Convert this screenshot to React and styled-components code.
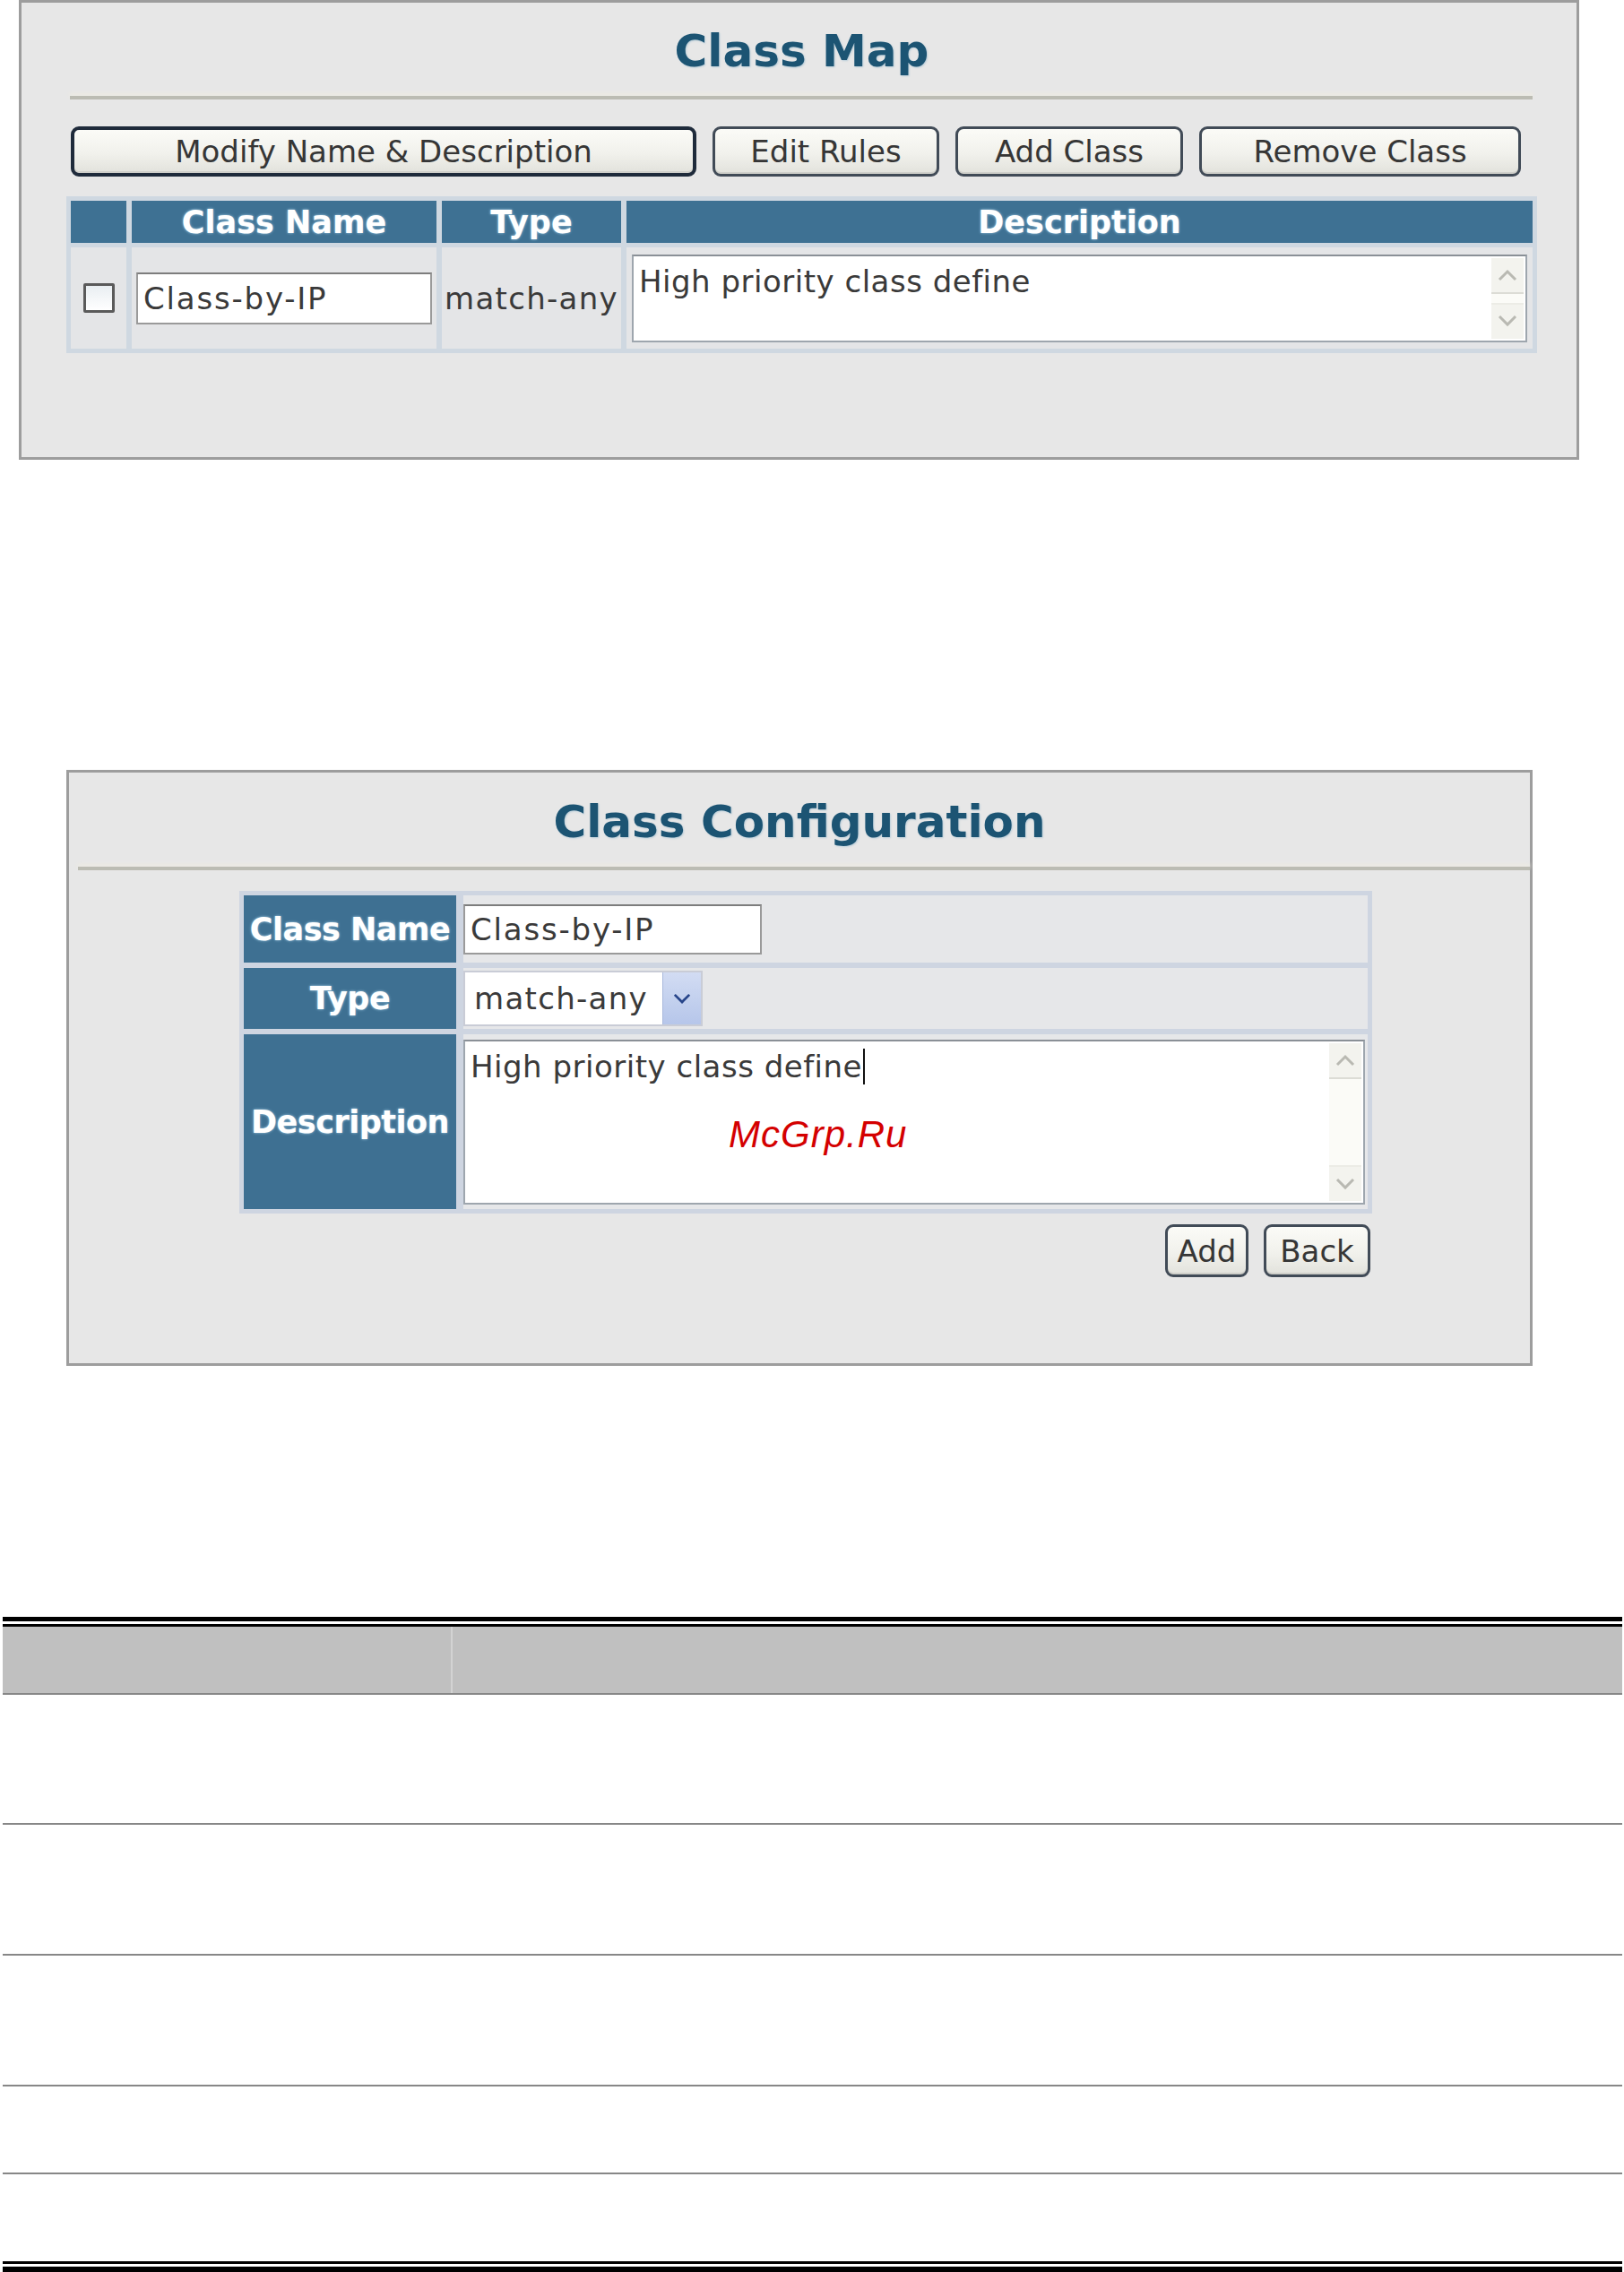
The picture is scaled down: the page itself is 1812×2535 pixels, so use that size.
import styled, { createGlobalStyle } from "styled-components";

const GlobalStyle = createGlobalStyle`
  html, body {
    margin: 0;
    padding: 0;
    background: #ffffff;
  }
  body {
    font-family: "DejaVu Sans", Verdana, sans-serif;
    color: #333;
  }
`;

const Page = styled.div`
  width: 1812px;
  height: 2535px;
  display: flex;
  flex-direction: column;
  background: #ffffff;
`;

const Panel = styled.section`
  box-sizing: border-box;
  display: flex;
  flex-direction: column;
  margin-left: ${(p) => p.$left}px;
  margin-top: ${(p) => p.$top}px;
  width: ${(p) => p.$width}px;
  height: ${(p) => p.$height}px;
  padding: ${(p) => p.$pad};
  border: 3px solid #9d9d9d;
  background: #e7e7e7;
`;

const Title = styled.h1`
  box-sizing: border-box;
  margin: 0;
  height: ${(p) => p.$height}px;
  padding-top: 5px;
  line-height: ${(p) => p.$height - 5}px;
  text-align: center;
  font-family: "DejaVu Sans", Verdana, sans-serif;
  font-weight: bold;
  font-size: 50px;
  color: #1c5473;
  text-shadow: 1px 1px 2px #b7ccd8;
`;

const Rule = styled.div`
  height: 4px;
  margin: ${(p) => p.$margin};
  background: #bcbcb3;
  box-shadow: 0 -3px 4px #eeebe2;
`;

const ButtonRow = styled.div`
  display: flex;
  justify-content: ${(p) => (p.$end ? "flex-end" : "flex-start")};
  gap: ${(p) => p.$gap}px;
  margin: ${(p) => p.$margin};
`;

const Button = styled.button`
  box-sizing: border-box;
  width: ${(p) => p.$width}px;
  height: ${(p) => p.$height}px;
  padding: 0;
  border: ${(p) => (p.$focused ? "4px solid #1f2b3b" : "3px solid #414b57")};
  border-radius: 9px;
  background: linear-gradient(#fbfbf7, #f1f1ec 55%, #e2e2dc);
  font-family: "DejaVu Sans", Verdana, sans-serif;
  font-size: 34px;
  color: #363636;
  box-shadow: inset 0 -2px 0 #cfcfca;
`;

const MapTable = styled.div`
  display: grid;
  grid-template-columns: 62px 340px 200px 1fr;
  grid-template-rows: 47px 113px;
  column-gap: 6px;
  row-gap: 5px;
  margin-top: 22px;
  padding: 5px;
  background: #cfd8e1;
`;

const HeadCell = styled.div`
  display: flex;
  align-items: center;
  justify-content: center;
  background: #3e7193;
  color: #ffffff;
  font-weight: bold;
  font-size: 35px;
  text-shadow: 0 0 3px #a9d2ea;
`;

const DataCell = styled.div`
  display: flex;
  align-items: center;
  justify-content: ${(p) => (p.$center ? "center" : "flex-start")};
  padding: ${(p) => p.$pad || "0"};
  background: #e4e5e7;
  font-size: 34px;
  letter-spacing: 1.3px;
  color: #3a3a3a;
  white-space: nowrap;
  overflow: hidden;
`;

const CheckBox = styled.span`
  box-sizing: border-box;
  width: 35px;
  height: 33px;
  border: 3px solid #5a5a5a;
  border-radius: 2px;
  background: linear-gradient(#e9eef2, #ffffff);
`;

const TextBox = styled.div`
  box-sizing: border-box;
  display: flex;
  align-items: center;
  width: ${(p) => p.$width}px;
  height: ${(p) => p.$height}px;
  padding-left: 6px;
  border: 2px solid #9a9a9a;
  border-top-color: #7d7d7d;
  background: #ffffff;
  font-size: 34px;
  letter-spacing: 1.8px;
  color: #3a3a3a;
`;

const Select = styled.div`
  box-sizing: border-box;
  display: flex;
  width: 267px;
  height: 62px;
  border: 2px solid #c9ccd6;
  background: #ffffff;
  font-size: 34px;
  letter-spacing: 1.3px;
  color: #3a3a3a;
`;

const SelectValue = styled.span`
  flex: 1;
  display: flex;
  align-items: center;
  padding-left: 10px;
`;

const SelectArrow = styled.span`
  display: flex;
  align-items: center;
  justify-content: center;
  width: 42px;
  background: linear-gradient(#d2dcf3, #b6c6ea);
  border-left: 1px solid #a9b9dc;
`;

const AreaWrap = styled.div`
  position: relative;
  box-sizing: border-box;
  width: ${(p) => p.$width}px;
  height: ${(p) => p.$height}px;
  padding: 8px 6px;
  border: 2px solid #9ea6ae;
  border-top-color: #8a9097;
  background: #ffffff;
  font-size: 34px;
  line-height: 40px;
  letter-spacing: 0.5px;
  color: #3a3a3a;
`;

const Caret = styled.span`
  display: inline-block;
  width: 2px;
  height: 40px;
  margin-left: 1px;
  vertical-align: top;
  background: #111;
`;

const ScrollBar = styled.div`
  position: absolute;
  top: 2px;
  right: 2px;
  bottom: 2px;
  width: 36px;
  display: flex;
  flex-direction: column;
  justify-content: space-between;
  background: #fbfbf7;
`;

const ScrollArrow = styled.span`
  display: flex;
  align-items: center;
  justify-content: center;
  height: 38px;
  background: #f3f3ee;
  border-bottom: ${(p) => (p.$up ? "2px solid #dcdcd5" : "none")};
  border-top: ${(p) => (p.$up ? "none" : "2px solid #ecece6")};
`;

const Watermark = styled.span`
  position: absolute;
  left: 294px;
  top: 84px;
  font-family: "Liberation Sans", Arial, sans-serif;
  font-style: italic;
  font-size: 42px;
  letter-spacing: 1px;
  color: #d40000;
`;

const FormTable = styled.div`
  display: grid;
  grid-template-columns: 237px 1fr;
  grid-template-rows: 75px 68px 195px;
  column-gap: 8px;
  row-gap: 6px;
  width: 1264px;
  margin: 23px 0 0 190px;
  padding: 5px;
  box-sizing: border-box;
  background: #ced5e1;
`;

const LabelCell = styled.div`
  display: flex;
  align-items: center;
  justify-content: center;
  background: #3e7092;
  color: #ffffff;
  font-weight: bold;
  font-size: 35px;
  letter-spacing: -0.5px;
  white-space: nowrap;
  text-shadow: 0 0 3px #a9d2ea;
`;

const ValueCell = styled.div`
  display: flex;
  align-items: flex-start;
  padding-top: ${(p) => p.$top}px;
  background: #e6e7e9;
`;

const DocTable = styled.div`
  display: flex;
  flex-direction: column;
  width: 1807px;
  margin: 280px 0 0 3px;
`;

const DoubleRule = styled.div`
  box-sizing: border-box;
  height: ${(p) => (p.$bottom ? 12 : 11)}px;
  border-top: ${(p) => (p.$bottom ? 3 : 5)}px solid #000;
  border-bottom: ${(p) => (p.$bottom ? 6 : 3)}px solid #000;
  background: #fff;
`;

const DocRow = styled.div`
  display: grid;
  grid-template-columns: 502px 1fr;
  height: ${(p) => p.$height}px;
  background: ${(p) => (p.$head ? "#c0c0c0" : "#ffffff")};
  border-bottom: ${(p) => (p.$last ? "none" : "2px solid #878787")};
`;

const DocCell = styled.div`
  border-right: ${(p) => (p.$head ? "2px solid #d3d3d3" : "none")};
`;

const UpChevron = () => (
  <svg width="22" height="14" viewBox="0 0 22 14">
    <path d="M2 12 L11 3 L20 12" fill="none" stroke="#b9b9b2" strokeWidth="3" />
  </svg>
);

const DownChevron = ({ color = "#b9b9b2", size = 22 }) => (
  <svg width={size} height={size * 0.64} viewBox="0 0 22 14">
    <path d="M2 2 L11 11 L20 2" fill="none" stroke={color} strokeWidth="3" />
  </svg>
);

const FakeScroll = () => (
  <ScrollBar>
    <ScrollArrow $up>
      <UpChevron />
    </ScrollArrow>
    <ScrollArrow>
      <DownChevron />
    </ScrollArrow>
  </ScrollBar>
);

const docRows = [143, 144, 144, 96, 97];

function ClassMap() {
  return (
    <Panel $left={21} $top={0} $width={1741} $height={516} $pad="0 44px 0 50px">
      <Title $height={104}>Class Map</Title>
      <Rule $margin="0 5px 0 4px" />
      <ButtonRow $gap={18} $margin="30px 0 0 5px">
        <Button $width={698} $height={56} $focused>
          Modify Name &amp; Description
        </Button>
        <Button $width={253} $height={56}>Edit Rules</Button>
        <Button $width={254} $height={56}>Add Class</Button>
        <Button $width={359} $height={56}>Remove Class</Button>
      </ButtonRow>
      <MapTable>
        <HeadCell />
        <HeadCell>Class Name</HeadCell>
        <HeadCell>Type</HeadCell>
        <HeadCell>Description</HeadCell>
        <DataCell $center>
          <CheckBox />
        </DataCell>
        <DataCell $center>
          <TextBox $width={330} $height={58}>Class-by-IP</TextBox>
        </DataCell>
        <DataCell $pad="0 0 0 3px">match-any</DataCell>
        <DataCell $pad="0 5px 0 6px">
          <AreaWrap $width={999} $height={98}>
            High priority class define
            <FakeScroll />
          </AreaWrap>
        </DataCell>
      </MapTable>
    </Panel>
  );
}

function ClassConfiguration() {
  return (
    <Panel $left={74} $top={346} $width={1636} $height={668} $pad="0">
      <Title $height={105}>Class Configuration</Title>
      <Rule $margin="0 0 0 10px" />
      <FormTable>
        <LabelCell>Class Name</LabelCell>
        <ValueCell $top={10}>
          <TextBox $width={333} $height={56}>Class-by-IP</TextBox>
        </ValueCell>
        <LabelCell>Type</LabelCell>
        <ValueCell $top={3}>
          <Select>
            <SelectValue>match-any</SelectValue>
            <SelectArrow>
              <DownChevron color="#27458a" size={20} />
            </SelectArrow>
          </Select>
        </ValueCell>
        <LabelCell>Description</LabelCell>
        <ValueCell $top={6}>
          <AreaWrap $width={1006} $height={184}>
            High priority class define
            <Caret />
            <Watermark>McGrp.Ru</Watermark>
            <FakeScroll />
          </AreaWrap>
        </ValueCell>
      </FormTable>
      <ButtonRow $end $gap={17} $margin="12px 178px 0 0">
        <Button $width={93} $height={59}>Add</Button>
        <Button $width={119} $height={59}>Back</Button>
      </ButtonRow>
    </Panel>
  );
}

function ParameterTable() {
  return (
    <DocTable>
      <DoubleRule />
      <DocRow $head $height={74}>
        <DocCell $head />
        <DocCell />
      </DocRow>
      {docRows.map((h, i) => (
        <DocRow key={i} $height={h} $last={i === docRows.length - 1}>
          <DocCell />
          <DocCell />
        </DocRow>
      ))}
      <DoubleRule $bottom />
    </DocTable>
  );
}

export default function App() {
  return (
    <>
      <GlobalStyle />
      <Page>
        <ClassMap />
        <ClassConfiguration />
        <ParameterTable />
      </Page>
    </>
  );
}
